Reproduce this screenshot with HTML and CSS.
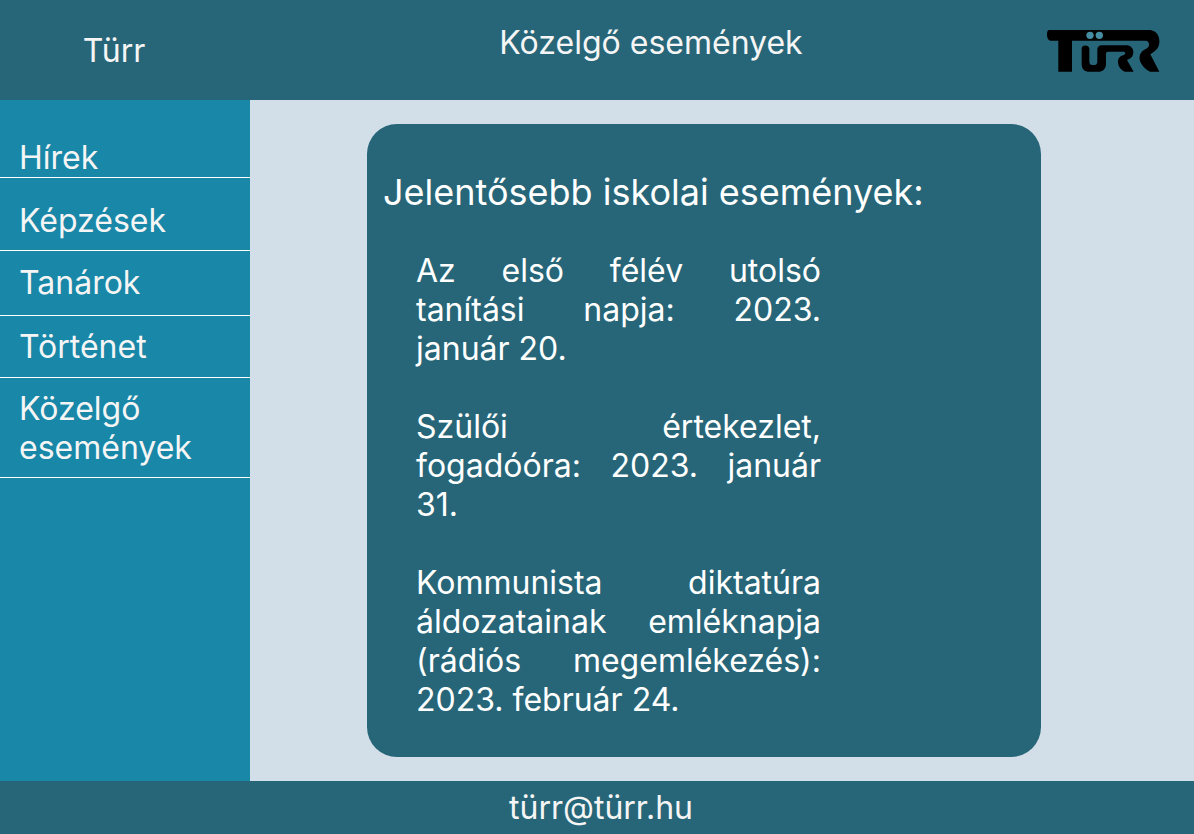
FILE: index.html
```html
<!DOCTYPE html>
<html lang="hu">
<head>
<meta charset="utf-8">
<meta name="viewport" content="width=device-width, initial-scale=1">
<title>Türr – Közelgő események</title>
<link rel="stylesheet" href="styles.css">
</head>
<body class="page">
  <header class="header">
    <p class="brand">Türr</p>
    <h1 class="title">Közelgő események</h1>
    <svg class="logo" viewBox="36 27 345 132" role="img" aria-label="Türr logó">
      <path d="M46 30H346C364 31 375 43 376 61C377 75 372 88 360 95L349 103L376 155H349C335 149 321 135 317 119C315 105 321 94 334 88C342 84 346 79 345 72C344 65 341 62 334 62H114V155H73V62H52C43 62 39 54 39 44C39 34 41 30 46 30Z"/>
      <path d="M143 84C145 74 163 74 166 84V123C166 131 168 135 175 135H181C188 135 190 131 190 123V91C190 81 194 76 205 76H276C290 76 298 84 298 97C298 108 292 116 279 120L299 155H272C260 149 253 139 252 128C251 116 257 109 267 106C273 104 275 101 273 97C271 95 268 95 265 95H222C218 95 216 97 216 102V134C214 148 206 155 193 155H167C151 155 143 147 143 131Z"/>
      <circle class="logo-dot" cx="168" cy="46" r="11"/>
      <circle class="logo-dot" cx="196" cy="46" r="11"/>
    </svg>
  </header>

  <nav class="sidebar" aria-label="Főmenü">
    <a class="nav-link nav-link-first" href="#hirek">Hírek</a>
    <a class="nav-link nav-link-tall" href="#kepzesek">Képzések</a>
    <a class="nav-link nav-link-medium" href="#tanarok">Tanárok</a>
    <a class="nav-link" href="#tortenet">Történet</a>
    <a class="nav-link nav-link-last" href="#esemenyek" aria-current="page">Közelgő események</a>
  </nav>

  <main class="content">
    <section class="card">
      <h2 class="card-title">Jelentősebb iskolai események:</h2>
      <div class="events">
        <p class="event">Az első félév utolsó tanítási napja: 2023. január 20.</p>
        <p class="event">Szülői értekezlet, fogadóóra: 2023. január 31.</p>
        <p class="event">Kommunista diktatúra áldozatainak emléknapja (rádiós megemlékezés): 2023. február 24.</p>
      </div>
    </section>
  </main>

  <footer class="footer">
    <a class="mail" href="mailto:türr@türr.hu">türr@türr.hu</a>
  </footer>
</body>
</html>
```
FILE: styles.css
```css
* {
  box-sizing: border-box;
}

.page {
  display: grid;
  grid-template-columns: 250px 1fr;
  grid-template-rows: auto 1fr auto;
  min-height: 100vh;
  margin: 0;
  background: #d3dfe8;
  color: #f5f5f5;
  font-family: Inter, "Liberation Sans", sans-serif;
  font-size: 32px;
  font-weight: 400;
  line-height: 39px;
}

.header {
  grid-column: 1 / -1;
  display: grid;
  grid-template-columns: 228px 1fr 148px;
  align-items: start;
  min-height: 100px;
  background: #276678;
}

.brand {
  margin: 0;
  padding-top: 31px;
  text-align: center;
}

.title {
  margin: 0;
  padding-top: 23px;
  padding-left: 28px;
  font-size: 32px;
  font-weight: 400;
  text-align: center;
}

.logo {
  width: 115px;
  height: 44px;
  margin-top: 29px;
}

.logo-dot {
  fill: #448ca1;
}

.sidebar {
  display: flex;
  flex-direction: column;
  background: #1887a8;
}

.nav-link {
  padding: 11px 19px;
  border-bottom: 1px solid #ffffff;
  color: inherit;
  text-decoration: none;
}

.nav-link-first {
  padding-top: 38px;
  padding-bottom: 0;
}

.nav-link-tall {
  padding-top: 23px;
  padding-bottom: 10px;
}

.nav-link-medium {
  padding-top: 12px;
  padding-bottom: 13px;
}

.nav-link-last {
  padding-bottom: 10px;
}

.content {
  padding: 24px 153px 24px 117px;
}

.card {
  height: 100%;
  padding: 46px 16px 37px;
  border-radius: 30px;
  background: #276678;
  color: #ffffff;
}

.card-title {
  margin: 0;
  font-size: 36px;
  font-weight: 400;
  line-height: 44px;
}

.events {
  display: flex;
  flex-direction: column;
  gap: 39px;
  max-width: 438px;
  padding: 37px 0 0 33px;
}

.event {
  margin: 0;
  text-align: justify;
}

.footer {
  grid-column: 1 / -1;
  padding: 7px 0;
  padding-left: 8px;
  background: #276678;
  text-align: center;
}

.mail {
  color: inherit;
  text-decoration: none;
}
```
